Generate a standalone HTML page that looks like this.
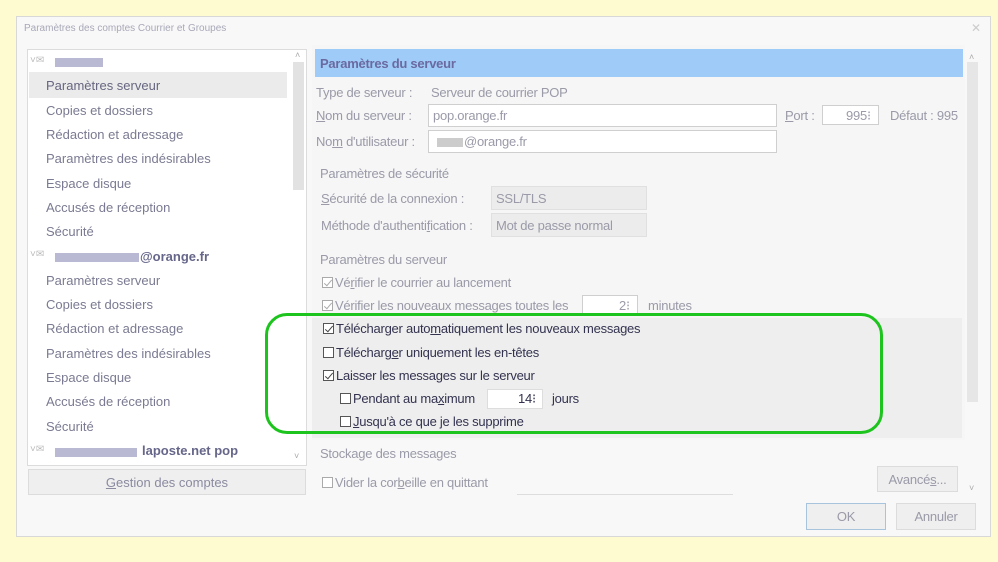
<!DOCTYPE html>
<html><head><meta charset="utf-8"><style>
*{margin:0;padding:0;box-sizing:border-box}
body{width:998px;height:562px;background:#fdfbcf;position:relative;overflow:hidden;font-family:"Liberation Sans",sans-serif}
.a{position:absolute;white-space:nowrap}
.dlg{left:16px;top:16px;width:975px;height:521px;background:#f8f8f8;border:1px solid #d8d8d8}
.tree{left:27px;top:49px;width:280px;height:417px;background:#fff;border:1px solid #dcdcdc}
.li{font-size:13px;color:#7a7a92;left:46px}
.n{font-size:13px;letter-spacing:-0.25px}
.g{color:#9a9aa8}
.d{color:#333350}
.cb{display:inline-block;width:11px;height:11px;border:1px solid #555;vertical-align:-1px;margin-right:2px;position:relative;background:#fff}
.cb.c::after{content:"";position:absolute;left:3px;top:0px;width:3px;height:7px;border:solid #444;border-width:0 1.5px 1.5px 0;transform:rotate(40deg)}
.cg{border-color:#aaa}.cg.c::after{border-color:#aaa}
.blur{display:inline-block;height:9px;background:#b9b9d4;vertical-align:0}
.inp{background:#fff;border:1px solid #cfcfcf}
.btn{background:#efefef;border:1px solid #dcdcdc;text-align:center;color:#9a9aa8}
</style></head><body>
<div class="a dlg"></div>
<div class="a" style="left:24px;top:23px;font-size:10px;color:#a8a8b8">Paramètres des comptes Courrier et Groupes</div>
<div class="a" style="left:971px;top:21px;font-size:12px;color:#ccc">✕</div>

<div class="a tree"></div>
<div class="a" style="left:29px;top:72px;width:258px;height:26px;background:#ebebeb"></div>
<div class="a" style="left:293px;top:62px;width:11px;height:128px;background:#e2e2e2"></div>
<div class="a" style="left:295px;top:50px;font-size:9px;color:#aaa">˄</div>
<div class="a" style="left:294px;top:451px;font-size:9px;color:#aaa">˅</div>
<div class="a" style="left:30px;top:55px;font-size:10px;color:#bbb">˅✉</div>
<div class="a blur" style="left:55px;top:58px;width:48px"></div>
<div class="a li" style="top:78px;color:#666680">Paramètres serveur</div>
<div class="a li" style="top:103px">Copies et dossiers</div>
<div class="a li" style="top:127px">Rédaction et adressage</div>
<div class="a li" style="top:151px">Paramètres des indésirables</div>
<div class="a li" style="top:176px">Espace disque</div>
<div class="a li" style="top:200px">Accusés de réception</div>
<div class="a li" style="top:224px">Sécurité</div>
<div class="a" style="left:30px;top:249px;font-size:10px;color:#bbb">˅✉</div>
<div class="a blur" style="left:55px;top:253px;width:84px"></div>
<div class="a" style="left:140px;top:249px;font-size:13px;font-weight:bold;color:#66668a">@orange.fr</div>
<div class="a li" style="top:273px">Paramètres serveur</div>
<div class="a li" style="top:297px">Copies et dossiers</div>
<div class="a li" style="top:321px">Rédaction et adressage</div>
<div class="a li" style="top:346px">Paramètres des indésirables</div>
<div class="a li" style="top:370px">Espace disque</div>
<div class="a li" style="top:394px">Accusés de réception</div>
<div class="a li" style="top:419px">Sécurité</div>
<div class="a" style="left:30px;top:444px;font-size:10px;color:#bbb">˅✉</div>
<div class="a blur" style="left:55px;top:448px;width:82px"></div>
<div class="a" style="left:142px;top:443px;font-size:13px;font-weight:bold;color:#66668a">laposte.net pop</div>
<div class="a btn" style="left:28px;top:469px;width:278px;height:26px;line-height:25px;font-size:13px;color:#8a8aa0"><u>G</u>estion des comptes</div>

<div class="a" style="left:312px;top:45px;width:653px;height:395px;background:#f6f6f6"></div>
<div class="a" style="left:315px;top:49px;width:648px;height:28px;background:#9fcbf8"></div>
<div class="a n" style="left:320px;top:56px;font-size:13px;font-weight:bold;color:#6a6aa0">Paramètres du serveur</div>
<div class="a" style="left:967px;top:62px;width:11px;height:340px;background:#e6e6e6"></div>
<div class="a" style="left:969px;top:52px;font-size:9px;color:#aaa">˄</div>
<div class="a" style="left:969px;top:483px;font-size:9px;color:#aaa">˅</div>

<div class="a n g" style="left:316px;top:85px">Type de serveur :</div>
<div class="a n g" style="left:431px;top:85px">Serveur de courrier POP</div>
<div class="a n g" style="left:316px;top:108px"><u>N</u>om du serveur :</div>
<div class="a inp" style="left:428px;top:104px;width:349px;height:23px"></div>
<div class="a n g" style="left:433px;top:108px">pop.orange.fr</div>
<div class="a n g" style="left:785px;top:108px"><u>P</u>ort :</div>
<div class="a inp" style="left:822px;top:105px;width:57px;height:20px"></div>
<div class="a n g" style="left:846px;top:108px">995⁝</div>
<div class="a n g" style="left:890px;top:108px">Défaut : 995</div>
<div class="a n g" style="left:316px;top:134px">No<u>m</u> d'utilisateur :</div>
<div class="a inp" style="left:428px;top:130px;width:349px;height:23px"></div>
<div class="a blur" style="left:437px;top:138px;width:26px;background:#ccc"></div>
<div class="a n g" style="left:464px;top:134px">@orange.fr</div>

<div class="a n g" style="left:320px;top:166px">Paramètres de sécurité</div>
<div class="a n g" style="left:321px;top:191px"><u>S</u>écurité de la connexion :</div>
<div class="a" style="left:491px;top:186px;width:156px;height:24px;background:#ececec;border:1px solid #e0e0e0"></div>
<div class="a n g" style="left:496px;top:191px">SSL/TLS</div>
<div class="a n g" style="left:321px;top:218px">Méthode d'authenti<u>f</u>ication :</div>
<div class="a" style="left:491px;top:213px;width:156px;height:24px;background:#ececec;border:1px solid #e0e0e0"></div>
<div class="a n g" style="left:496px;top:218px">Mot de passe normal</div>
<div class="a n g" style="left:320px;top:252px">Paramètres du serveur</div>
<div class="a n g" style="left:322px;top:275px"><span class="cb c cg"></span>Vé<u>r</u>ifier le courrier au lancement</div>
<div class="a n g" style="left:322px;top:298px"><span class="cb c cg"></span>Vérifier les nouveaux messages toutes les</div>
<div class="a inp" style="left:582px;top:295px;width:56px;height:20px"></div>
<div class="a n g" style="left:619px;top:298px">2⁝</div>
<div class="a n g" style="left:648px;top:298px">minutes</div>

<div class="a" style="left:312px;top:318px;width:650px;height:120px;background:#eeeeee"></div>
<div class="a n d" style="left:323px;top:321px"><span class="cb c"></span>Télécharger auto<u>m</u>atiquement les nouveaux messages</div>
<div class="a n d" style="left:323px;top:345px"><span class="cb"></span>Télécharg<u>e</u>r uniquement les en-têtes</div>
<div class="a n d" style="left:323px;top:368px"><span class="cb c"></span>Laisser les messages sur le serveur</div>
<div class="a n d" style="left:340px;top:391px"><span class="cb"></span>Pendant au ma<u>x</u>imum</div>
<div class="a inp" style="left:487px;top:389px;width:56px;height:20px;border-color:#ddd"></div>
<div class="a n d" style="left:518px;top:391px">14⁝</div>
<div class="a n d" style="left:552px;top:391px">jours</div>
<div class="a n d" style="left:340px;top:414px"><span class="cb"></span><u>J</u>usqu'à ce que je les supprime</div>
<div class="a" style="left:265px;top:313px;width:618px;height:121px;border:3px solid #1ec41e;border-radius:22px"></div>

<div class="a n g" style="left:320px;top:446px">Stockage des messages</div>
<div class="a n g" style="left:322px;top:475px"><span class="cb cg"></span>Vider la cor<u>b</u>eille en quittant</div>
<div class="a" style="left:517px;top:494px;width:216px;height:1px;background:#ddd"></div>
<div class="a btn n" style="left:877px;top:466px;width:81px;height:26px;line-height:25px">Avancé<u>s</u>...</div>
<div class="a btn n" style="left:806px;top:503px;width:80px;height:27px;line-height:26px;border-color:#a8c4dc">OK</div>
<div class="a btn n" style="left:896px;top:503px;width:80px;height:27px;line-height:26px">Annuler</div>
</body></html>
